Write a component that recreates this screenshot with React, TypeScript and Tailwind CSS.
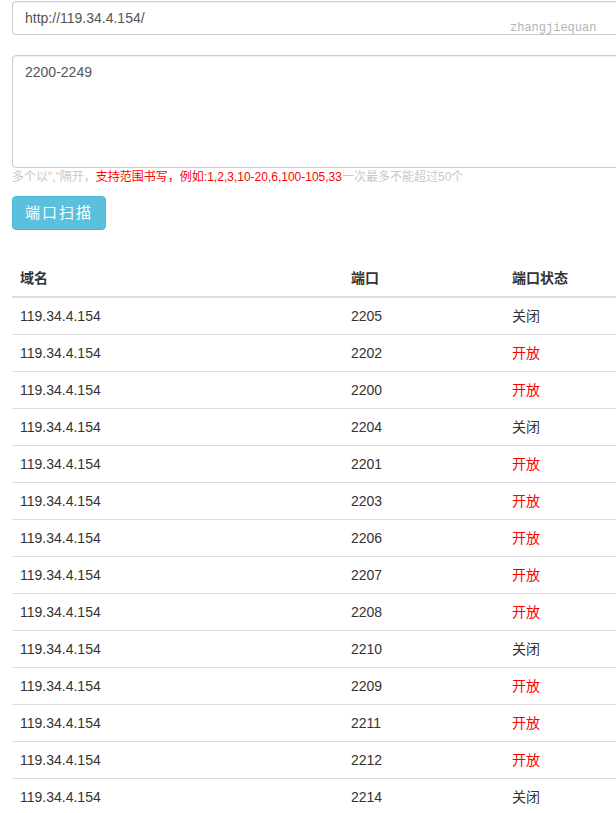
import React from "react";

const rows: [string, boolean][] = [
  ["2205", false],
  ["2202", true],
  ["2200", true],
  ["2204", false],
  ["2201", true],
  ["2203", true],
  ["2206", true],
  ["2207", true],
  ["2208", true],
  ["2210", false],
  ["2209", true],
  ["2211", true],
  ["2212", true],
  ["2214", false],
];

export default function App() {
  return (
    <div
      className="w-full overflow-hidden bg-white text-[14px] leading-5 text-[#333]"
      style={{ fontFamily: '"Liberation Sans", Arial, "Noto Sans CJK SC", sans-serif' }}
    >
      <div className="w-[720px] pl-3 pt-px">
        <div className="relative">
          <input
            readOnly
            value="http://119.34.4.154/"
            className="block h-[34px] w-full rounded border border-[#ccc] bg-white px-3 py-[6px] text-[14px] text-[#555] shadow-[inset_0_1px_1px_rgba(0,0,0,0.075)] outline-none"
          />
          <span
            className="absolute left-[498px] top-[20px] text-[12px] leading-[14px] text-[#b4b4b4]"
            style={{ fontFamily: '"Liberation Mono", "DejaVu Sans Mono", monospace' }}
          >
            zhangjiequan
          </span>
        </div>
        <textarea
          readOnly
          value="2200-2249"
          className="mt-5 block h-[113px] w-full resize-none rounded border border-[#ccc] bg-white px-3 py-[6px] text-[14px] leading-5 text-[#555] shadow-[inset_0_1px_1px_rgba(0,0,0,0.075)] outline-none"
        />
        <p className="mt-[1px] text-[12px] leading-[17px] text-[#c8c8c8]">
          多个以","隔开，<span className="text-[#f00]">支持范围书写，例如:1,2,3,10-20,6,100-105,33</span>一次最多不能超过50个
        </p>
        <button className="mt-[10px] h-[34px] rounded border border-[#46b8da] bg-[#5bc0de] px-3 text-[15px] tracking-[2px] text-white">
          端口扫描
        </button>
        <table className="mt-[30px] w-full border-collapse text-left">
          <thead>
            <tr className="border-b-2 border-[#ddd]">
              <th className="w-[331px] px-2 py-2 font-bold">域名</th>
              <th className="w-[161px] px-2 py-2 font-bold">端口</th>
              <th className="px-2 py-2 font-bold">端口状态</th>
            </tr>
          </thead>
          <tbody>
            {rows.map(([port, open], i) => (
              <tr key={i} className="border-b border-[#ddd]">
                <td className="px-2 py-2">119.34.4.154</td>
                <td className="px-2 py-2">{port}</td>
                <td className={"px-2 py-2 " + (open ? "text-[#f00]" : "")}>{open ? "开放" : "关闭"}</td>
              </tr>
            ))}
          </tbody>
        </table>
      </div>
    </div>
  );
}
